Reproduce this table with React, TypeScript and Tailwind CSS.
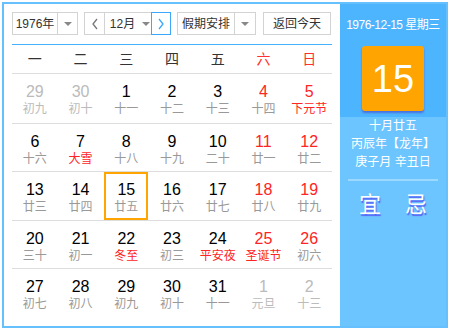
import React from 'react'

type Day = {
  n: number
  lunar: string
  other?: boolean
  fest?: boolean
  sel?: boolean
}

const weeks: Day[][] = [
  [
    { n: 29, lunar: '初九', other: true },
    { n: 30, lunar: '初十', other: true },
    { n: 1, lunar: '十一' },
    { n: 2, lunar: '十二' },
    { n: 3, lunar: '十三' },
    { n: 4, lunar: '十四' },
    { n: 5, lunar: '下元节', fest: true },
  ],
  [
    { n: 6, lunar: '十六' },
    { n: 7, lunar: '大雪', fest: true },
    { n: 8, lunar: '十八' },
    { n: 9, lunar: '十九' },
    { n: 10, lunar: '二十' },
    { n: 11, lunar: '廿一' },
    { n: 12, lunar: '廿二' },
  ],
  [
    { n: 13, lunar: '廿三' },
    { n: 14, lunar: '廿四' },
    { n: 15, lunar: '廿五', sel: true },
    { n: 16, lunar: '廿六' },
    { n: 17, lunar: '廿七' },
    { n: 18, lunar: '廿八' },
    { n: 19, lunar: '廿九' },
  ],
  [
    { n: 20, lunar: '三十' },
    { n: 21, lunar: '初一' },
    { n: 22, lunar: '冬至', fest: true },
    { n: 23, lunar: '初三' },
    { n: 24, lunar: '平安夜', fest: true },
    { n: 25, lunar: '圣诞节', fest: true },
    { n: 26, lunar: '初六' },
  ],
  [
    { n: 27, lunar: '初七' },
    { n: 28, lunar: '初八' },
    { n: 29, lunar: '初九' },
    { n: 30, lunar: '初十' },
    { n: 31, lunar: '十一' },
    { n: 1, lunar: '元旦', other: true },
    { n: 2, lunar: '十三', other: true },
  ],
]

const rowHeights = ['h-[49px]', 'h-[48px]', 'h-[49px]', 'h-[48px]', 'h-[49px]']

const Caret = () => (
  <span className="block w-0 h-0 border-l-[4px] border-r-[4px] border-t-[4px] border-l-transparent border-r-transparent border-t-[#888]" />
)

const Chevron = ({ dir, color }: { dir: 'l' | 'r'; color: string }) => (
  <svg width="8" height="12" viewBox="0 0 8 12">
    <polyline
      points={dir === 'l' ? '6,1 2,6 6,11' : '2,1 6,6 2,11'}
      fill="none"
      stroke={color}
      strokeWidth="1.3"
    />
  </svg>
)

const App = () => {
  return (
    <div className="w-[450px] h-[330px] bg-white pl-[2px] pt-[2px] font-['Liberation_Sans','Noto_Sans_CJK_SC',sans-serif]">
      <div className="w-[446px] h-[326px] border-2 border-[#66c0fd] flex">
        {/* left side: controls and month grid */}
        <div className="w-[336px] px-2 pt-2">
          <div className="flex h-[23px] text-[12px] text-[#333]">
            <div className="w-[66px] flex border border-[#d3d3d3]">
              <div className="flex-1 flex items-center justify-center">1976年</div>
              <div className="w-[20px] flex items-center justify-center border-l border-[#d3d3d3]">
                <Caret />
              </div>
            </div>
            <div className="ml-[6px] w-[87px] flex border border-[#d3d3d3] border-r-0">
              <div className="w-[19px] flex items-center justify-center">
                <Chevron dir="l" color="#777" />
              </div>
              <div className="flex-1 flex items-center justify-center gap-[7px] border-l border-[#d3d3d3]">
                <span className="pl-[4px]">12月</span>
                <Caret />
              </div>
              <div className="w-[20px] -my-px flex items-center justify-center border border-[#3ca8fc]">
                <Chevron dir="r" color="#3ca8fc" />
              </div>
            </div>
            <div className="ml-[6px] w-[79px] flex border border-[#d3d3d3]">
              <div className="flex-1 flex items-center justify-center">假期安排</div>
              <div className="w-[21px] flex items-center justify-center border-l border-[#d3d3d3]">
                <Caret />
              </div>
            </div>
            <div className="ml-[7px] w-[68px] flex items-center justify-center border border-[#d3d3d3]">
              返回今天
            </div>
          </div>

          <div className="mt-[9px] h-px bg-[#44b2fd]" />

          <div className="grid grid-cols-7 h-[29px] items-center text-[14px] text-[#333] border-b border-[#dddddd]">
            {['一', '二', '三', '四', '五', '六', '日'].map((w, i) => (
              <div key={w} className={`text-center ${i >= 5 ? 'text-[#ff3030]' : ''}`}>
                {w}
              </div>
            ))}
          </div>

          {weeks.map((week, r) => (
            <div
              key={r}
              className={`grid grid-cols-7 ${rowHeights[r]} ${r > 0 ? 'border-t border-[#dddddd]' : ''}`}
            >
              {week.map((d, c) => {
                const weekend = c >= 5
                const numColor = d.other
                  ? 'text-[#bbbbbb]'
                  : weekend
                    ? 'text-[#ff2424]'
                    : 'text-black'
                const lunarColor = d.other
                  ? 'text-[#bbbbbb]'
                  : d.fest
                    ? 'text-[#ff2424]'
                    : 'text-[#999999]'
                return (
                  <div
                    key={c}
                    className={`mx-px flex flex-col items-center border-2 pt-[6px] ${
                      d.sel ? 'border-[#ffa400]' : 'border-transparent'
                    }`}
                  >
                    <span className={`text-[16px] leading-[19px] ${numColor}`}>{d.n}</span>
                    <span className={`text-[12px] leading-[16px] ${lunarColor}`}>{d.lunar}</span>
                  </div>
                )
              })}
            </div>
          ))}
        </div>

        {/* right side: selected day */}
        <div className="flex-1 flex flex-col bg-[#6cc5fe] text-white">
          <div className="h-[113px] bg-[#4db4fe] flex flex-col items-center pt-[13px]">
            <div className="text-[12px] leading-[16px] tracking-[-0.5px]">1976-12-15 星期三</div>
            <div className="mt-[13px] w-[62px] h-[65px] rounded-[3px] bg-[#ffa400] flex items-center justify-center shadow-[0_2px_2px_rgba(70,70,200,0.6)]">
              <span className="text-[38px] leading-none">15</span>
            </div>
          </div>
          <div className="flex flex-col items-center text-[12px] leading-[18px]">
            <div>十月廿五</div>
            <div>丙辰年【龙年】</div>
            <div>庚子月 辛丑日</div>
          </div>
          <div className="mx-2 mt-[8px] h-[2px] bg-[#9dd8ff]" />
          <div className="mt-[11px] flex justify-center gap-[24px] text-[22px] leading-[26px] [text-shadow:1px_2px_1px_#5b62f5]">
            <span>宜</span>
            <span>忌</span>
          </div>
        </div>
      </div>
    </div>
  )
}

export default App
